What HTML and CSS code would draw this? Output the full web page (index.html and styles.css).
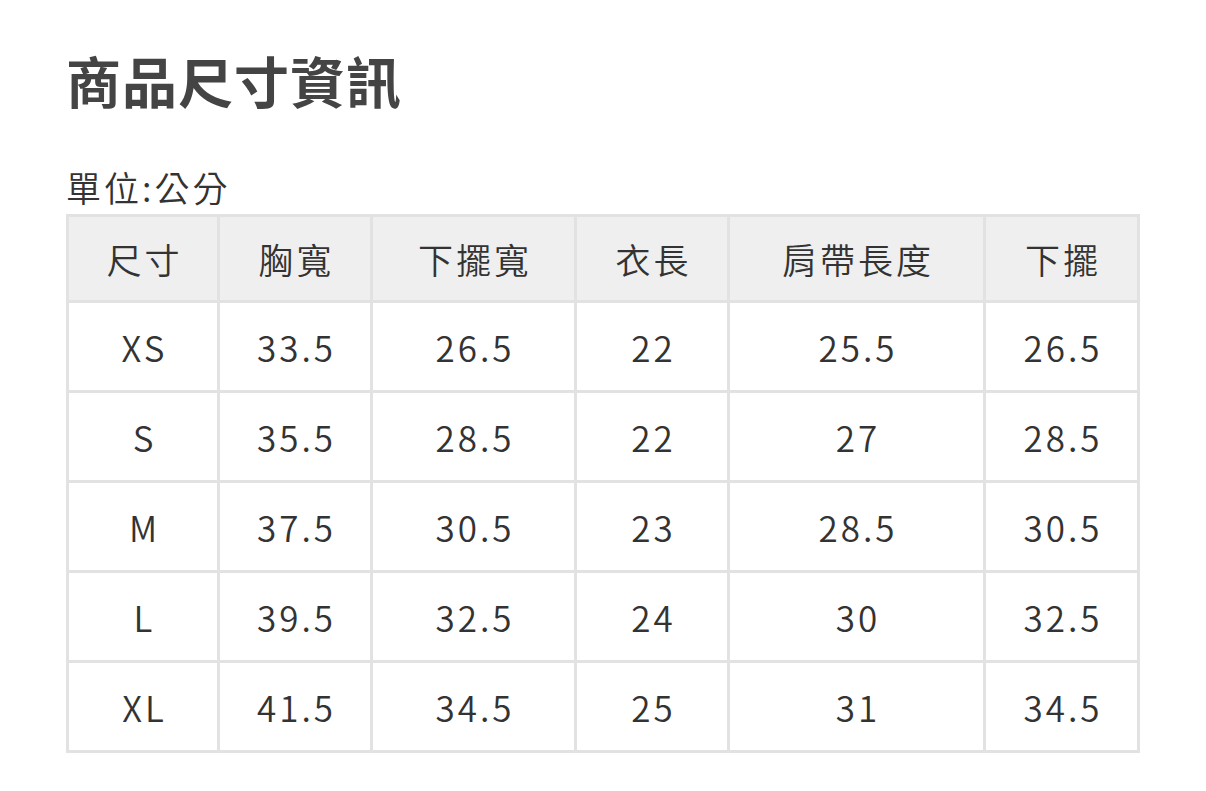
FILE: index.html
```html
<!DOCTYPE html>
<html lang="zh-Hant">
<head>
<meta charset="utf-8">
<link rel="stylesheet" href="styles.css">
</head>
<body>
<div class="page">
  <h1 class="title">商品尺寸資訊</h1>
  <p class="unit">單位:公分</p>
  <table class="size-table">
    <colgroup>
      <col class="c1"><col class="c2"><col class="c3"><col class="c4"><col class="c5"><col class="c6">
    </colgroup>
    <thead>
      <tr><th>尺寸</th><th>胸寬</th><th>下擺寬</th><th>衣長</th><th>肩帶長度</th><th>下擺</th></tr>
    </thead>
    <tbody>
      <tr><td>XS</td><td>33.5</td><td>26.5</td><td>22</td><td>25.5</td><td>26.5</td></tr>
      <tr><td>S</td><td>35.5</td><td>28.5</td><td>22</td><td>27</td><td>28.5</td></tr>
      <tr><td>M</td><td>37.5</td><td>30.5</td><td>23</td><td>28.5</td><td>30.5</td></tr>
      <tr><td>L</td><td>39.5</td><td>32.5</td><td>24</td><td>30</td><td>32.5</td></tr>
      <tr><td>XL</td><td>41.5</td><td>34.5</td><td>25</td><td>31</td><td>34.5</td></tr>
    </tbody>
  </table>
</div>
</body>
</html>
```
FILE: styles.css
```css
html, body {
  margin: 0;
  padding: 0;
  background: #ffffff;
}
body {
  font-family: "Noto Sans CJK TC", "Noto Sans", sans-serif;
  color: #333333;
}
.page {
  padding: 45px 0 0 66px;
}
.title {
  margin: 0;
  font-size: 55px;
  line-height: 68px;
  font-weight: 700;
  color: #444444;
  letter-spacing: 1px;
}
.unit {
  margin: 52px 0 0 0;
  font-size: 35px;
  line-height: 44px;
  font-weight: 350;
  color: #333333;
  letter-spacing: 3px;
}
.size-table {
  margin-top: 5px;
  border-collapse: collapse;
  width: 1071px;
  table-layout: fixed;
}
.size-table th,
.size-table td {
  border: 3px solid #e2e2e2;
  text-align: center;
  font-size: 35px;
  font-weight: 350;
  color: #333333;
  padding: 0 0 0 3px;
  letter-spacing: 3px;
}
.size-table th {
  background: #efefef;
  height: 83px;
}
.size-table td {
  height: 87px;
}
.c1 { width: 151px; }
.c2 { width: 153px; }
.c3 { width: 204px; }
.c4 { width: 153px; }
.c5 { width: 256px; }
.c6 { width: 154px; }
```
